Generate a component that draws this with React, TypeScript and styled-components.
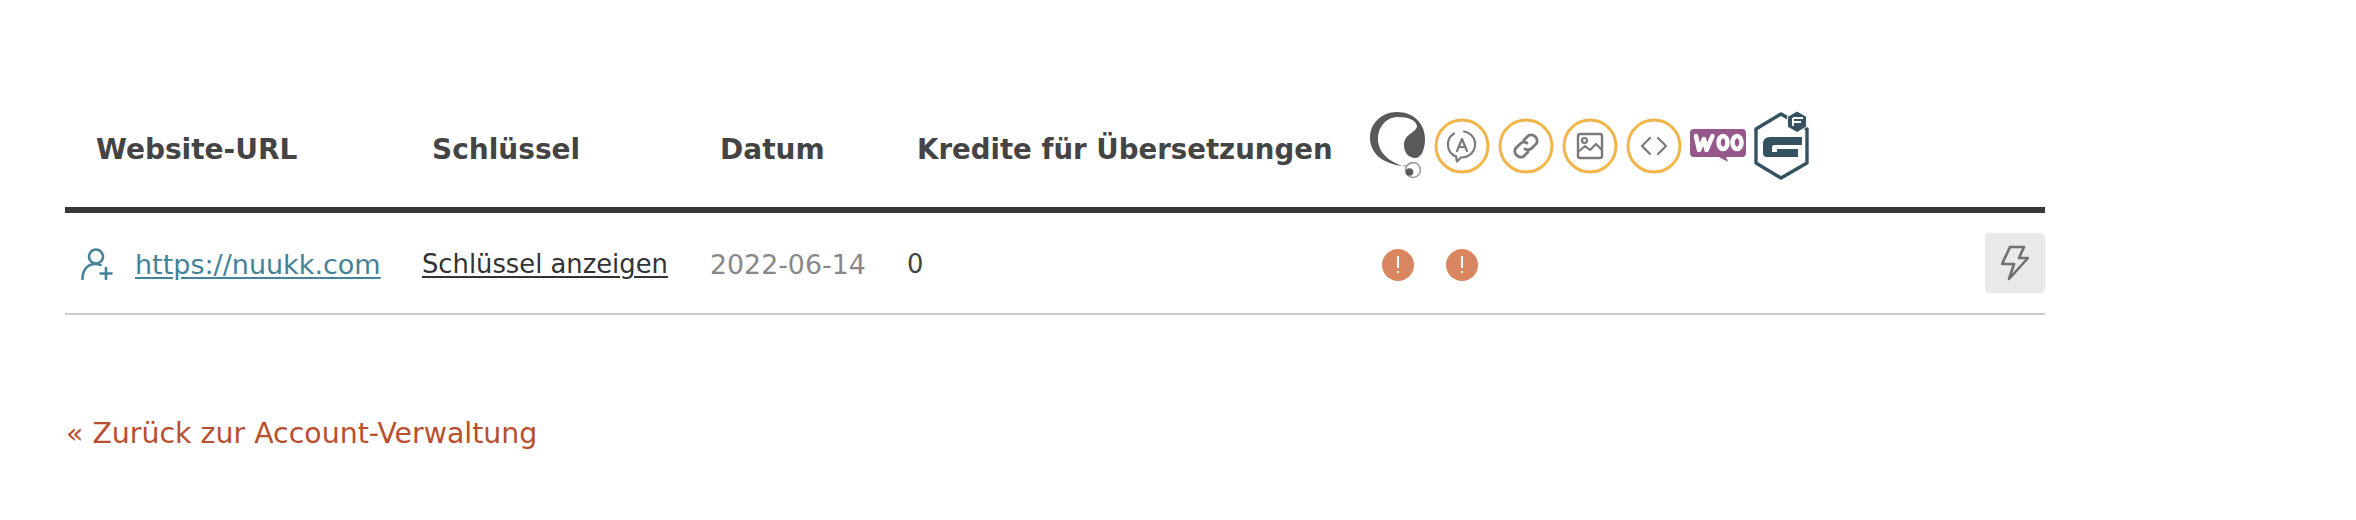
import React from "react";
import styled, { createGlobalStyle } from "styled-components";

const Global = createGlobalStyle`
  html, body { margin: 0; padding: 0; background: #fff; }
  body { font-family: "DejaVu Sans", Verdana, sans-serif; color: #444; }
`;

const Page = styled.main`
  width: 1980px;
  margin-left: 65px;
  padding-top: 83px;
`;

const Table = styled.table`
  width: 1980px;
  table-layout: fixed;
  border-collapse: collapse;
`;

const HeadRow = styled.tr`
  border-bottom: 6px solid #383838;
`;

const HeadCell = styled.th<{ $pad?: number; $size?: number }>`
  height: 116px;
  padding: 8px 0 0 ${(p) => p.$pad ?? 20}px;
  vertical-align: middle;
  text-align: left;
  font-size: ${(p) => p.$size ?? 28}px;
  font-weight: 700;
  color: #444;
  white-space: nowrap;
`;

const IconHeadCell = styled.th`
  height: 124px;
  padding: 0;
  vertical-align: middle;
`;

const BodyRow = styled.tr`
  border-bottom: 2px solid #ccc;
`;

const Cell = styled.td<{ $pad?: number }>`
  height: 98px;
  padding: 2px 0 0 ${(p) => p.$pad ?? 10}px;
  vertical-align: middle;
  font-size: 25.8px;
  color: #444;
  white-space: nowrap;
`;

const SiteLink = styled.a`
  color: #448299;
  font-size: 27px;
  text-decoration: none;
`;

const SiteIcon = styled.svg`
  vertical-align: -6px;
  margin-right: 22px;
`;

const SiteText = styled.span`
  text-decoration: underline;
  text-underline-offset: 3px;
`;

const KeyLink = styled.a`
  color: #333;
  text-decoration: underline;
  text-underline-offset: 3px;
`;

const DateText = styled.span`
  color: #888;
  font-size: 26.8px;
`;

const Plugins = styled.div`
  display: flex;
  align-items: center;
  gap: 8px;
  padding: 1px 0 0 13px;
`;

const HeadIcon = styled.svg`
  display: block;
  flex: none;
`;

const Warnings = styled.div`
  display: flex;
  gap: 32px;
  align-items: center;
  padding: 2px 0 0 15px;
`;

const Warning = styled.span`
  width: 32px;
  height: 32px;
  border-radius: 50%;
  background: #d98660;
  display: flex;
  align-items: center;
  justify-content: center;
`;

const ActionCell = styled(Cell)`
  padding: 0;
  text-align: right;
`;

const Action = styled.button`
  width: 60px;
  height: 60px;
  border: 0;
  border-radius: 4px;
  background: #e9e9e9;
  padding: 0;
  display: inline-flex;
  align-items: center;
  justify-content: center;
  vertical-align: middle;
`;

const BackLink = styled.a`
  display: block;
  margin-top: 103px;
  padding-left: 1px;
  font-size: 28.4px;
  line-height: 32px;
  color: #b84f2e;
  text-decoration: none;
`;

const Ring = ({ children }: { children: React.ReactNode }) => (
  <HeadIcon width="56" height="56" viewBox="0 0 56 56">
    <circle cx="28" cy="28" r="26" fill="none" stroke="#f2b54a" strokeWidth="3" />
    <g fill="none" stroke="#7a7a7a" strokeWidth="2.2" strokeLinecap="round" strokeLinejoin="round">{children}</g>
  </HeadIcon>
);

const Bang = () => (
  <svg width="4" height="18" viewBox="0 0 4 18" fill="#fff">
    <rect x="1" y="0" width="2" height="12" />
    <rect x="1" y="15" width="2" height="2" />
  </svg>
);

export default function App() {
  return (
    <>
      <Global />
      <Page>
        <Table>
          <colgroup>
            <col style={{ width: 347 }} />
            <col style={{ width: 288 }} />
            <col style={{ width: 197 }} />
            <col style={{ width: 460 }} />
            <col />
            <col style={{ width: 60 }} />
          </colgroup>
          <thead>
            <HeadRow>
              <HeadCell $pad={31}>Website-URL</HeadCell>
              <HeadCell>Schlüssel</HeadCell>
              <HeadCell>Datum</HeadCell>
              <HeadCell $size={27.6}>Kredite für Übersetzungen</HeadCell>
              <IconHeadCell colSpan={2}>
                <Plugins>
                  <HeadIcon width="56" height="68" viewBox="0 0 56 68">
                    <path d="M27 0C12 0 0 11 0 26C0 42 14 52 33 54C20 50 8 41 8 27C8 14 17 5 28 5C38 5 46 8 47 14C47 17 44 19 40 22C36 25 34 28 34 33C34 41 39 46 45 46C51 46 55 38 55 27C55 11 43 0 27 0Z" fill="#58595b" />
                    <path d="M33 54C36 54.500 39 52 43 51" fill="none" stroke="#999" strokeWidth="1" />
                    <circle cx="43" cy="58" r="7.500" fill="none" stroke="#9a9a9a" strokeWidth="1.500" />
                    <circle cx="39.500" cy="60" r="3.800" fill="#58595b" />
                  </HeadIcon>
                  <Ring>
                    <path d="M30 13.500a13 13 0 0 1 4 24.500c-2 1-4 1.500-7 1.500l-4 4-1-5a13 13 0 0 1-2-23" />
                    <path d="M23 33l5-12 5 12M24.700 29h6.600" />
                  </Ring>
                  <Ring>
                    <path strokeWidth="2.800" d="M26 22l4.500-4.500a6 6 0 0 1 8 8l-4.500 4.500a6 6 0 0 1-7 1" />
                    <path strokeWidth="2.800" d="M30 34l-4.500 4.500a6 6 0 0 1-8-8l4.500-4.500a6 6 0 0 1 7-1" />
                  </Ring>
                  <Ring>
                    <rect x="16" y="16" width="24" height="24" rx="2" strokeWidth="2.400" />
                    <circle cx="22.500" cy="22.500" r="2.500" />
                    <path d="M16 34l7-6 5 4 6-6 6 6" />
                  </Ring>
                  <Ring>
                    <path strokeWidth="2.200" d="M24 20l-8 8 8 8M32 20l8 8-8 8" />
                  </Ring>
                  <HeadIcon width="56" height="34" viewBox="0 0 56 34">
                    <path d="M4 0h48a4 4 0 0 1 4 4v20a4 4 0 0 1-4 4H36l2 5-9-5H4a4 4 0 0 1-4-4V4a4 4 0 0 1 4-4z" fill="#96588a" />
                    <g fill="none" stroke="#fff" strokeLinecap="round" strokeLinejoin="round">
                      <path strokeWidth="4.500" d="M6 7l3 14 5-11 2.500 11 6-14" />
                      <ellipse strokeWidth="4.500" cx="33" cy="13.500" rx="4.500" ry="6.500" />
                      <ellipse strokeWidth="4.500" cx="47" cy="13.500" rx="4.500" ry="6.500" />
                    </g>
                  </HeadIcon>
                  <HeadIcon width="56" height="69" viewBox="0 0 56 69">
                    <path d="M27 3L2 18v34l25 15 26-15V18z" fill="#fff" stroke="#34525f" strokeWidth="3.400" strokeLinejoin="round" />
                    <path d="M48 26v8H20Q18 34 18 37v4h5v-3h21v8H13Q9 46 9 42v-9q0-7 7-7z" fill="#34525f" />
                    <path d="M43 0l9.500 5.500v10.500L43 21.500l-9.500-5.500V5.500z" fill="#34525f" stroke="#fff" strokeWidth="1" />
                    <path d="M39 7h10M39 11h8M39 7v8" stroke="#fff" strokeWidth="2" fill="none" />
                  </HeadIcon>
                </Plugins>
              </IconHeadCell>
            </HeadRow>
          </thead>
          <tbody>
            <BodyRow>
              <Cell $pad={16}>
                <SiteLink href="#">
                  <SiteIcon width="32" height="32" viewBox="0 0 32 32" fill="none" stroke="#448299" strokeWidth="2.600" strokeLinecap="round">
                    <circle cx="15" cy="8.500" r="7" />
                    <path d="M1.500 31c0-8 4-15 13-15 2 0 4 .300 5 1" />
                    <path d="M25 20v11M19.500 25.500h11" />
                  </SiteIcon>
                  <SiteText>https://nuukk.com</SiteText>
                </SiteLink>
              </Cell>
              <Cell>
                <KeyLink href="#">Schlüssel anzeigen</KeyLink>
              </Cell>
              <Cell>
                <DateText>2022-06-14</DateText>
              </Cell>
              <Cell>0</Cell>
              <Cell>
                <Warnings>
                  <Warning><Bang /></Warning>
                  <Warning><Bang /></Warning>
                </Warnings>
              </Cell>
              <ActionCell>
                <Action aria-label="Aktion">
                  <svg width="28" height="36" viewBox="0 0 28 36" fill="none" stroke="#707070" strokeWidth="2.600" strokeLinejoin="round">
                    <path d="M9 2h14l-5 11h9L8 34l5-15H1z" />
                  </svg>
                </Action>
              </ActionCell>
            </BodyRow>
          </tbody>
        </Table>
        <BackLink href="#">« Zurück zur Account-Verwaltung</BackLink>
      </Page>
    </>
  );
}
